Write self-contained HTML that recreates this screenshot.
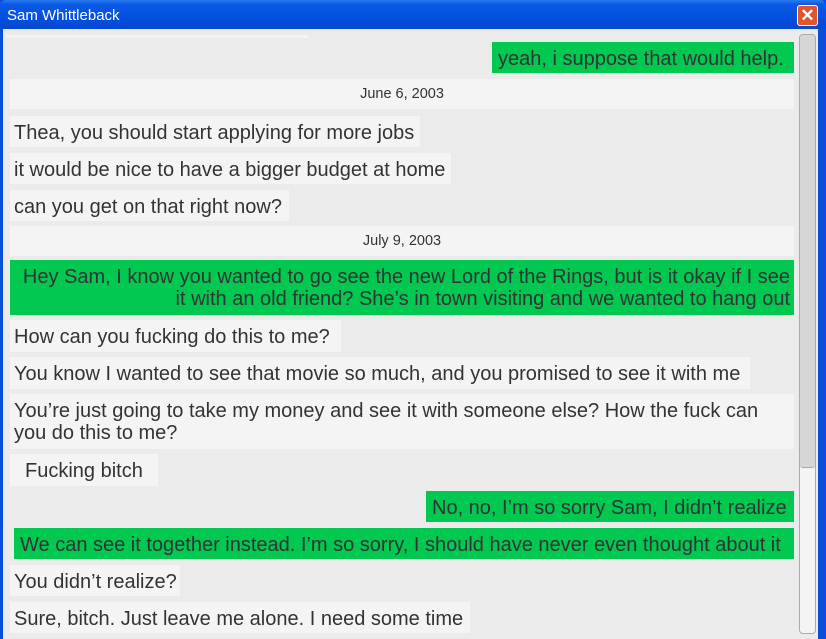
<!DOCTYPE html>
<html><head><meta charset="utf-8"><style>
*{margin:0;padding:0;box-sizing:border-box}
body{width:826px;height:639px;overflow:hidden;background:#0a4fd8;font-family:"Liberation Sans",sans-serif;position:relative}
.title{position:absolute;left:0;top:0;width:826px;height:29px;background:linear-gradient(#2a7cf0 0%,#0a5ae6 15%,#0550e0 60%,#0448d0 100%);border-radius:6px 6px 0 0}
.title span{position:absolute;left:7px;top:7px;color:#fff;font-size:15px}
.close{position:absolute;left:797px;top:5px;width:21px;height:21px;background:#e0552e;border:1px solid #fff;border-radius:3px;color:#fff;font-size:17px;line-height:19px;text-align:center;font-weight:bold}
.body{position:absolute;left:3px;top:29px;width:815px;height:610px;background:#ebebeb}
.b{position:absolute;background:#f4f4f4;color:#333;font-size:20px;line-height:22px;padding:6px 4px 4px 4px;white-space:nowrap;overflow:hidden}
.g{background:#00c850;padding-left:6px}
.d{position:absolute;left:10px;width:784px;height:30px;background:#f4f4f4;font-size:14.5px;color:#333;text-align:center;line-height:30px}
.sb{position:absolute;left:799px;top:34px;width:17px;height:600px;border:1px solid #aaa;border-radius:4px;background:#f4f4f4}
.th{position:absolute;left:0;top:0;width:15px;height:433px;background:#d6d6d6;border-bottom:1px solid #aaa;border-radius:3px}
</style></head><body>
<div class="title"><span>Sam Whittleback</span><div class="close">✕</div></div>
<div class="body"></div>
<div style="position:absolute;left:6px;top:35px;width:302px;height:3px;background:#f4f4f4"></div>
<div class="b g" style="left:492px;top:42px;width:302px;height:31px">yeah, i suppose that would help.</div>
<div class="d" style="top:79px">June 6, 2003</div>
<div class="b" style="left:10px;top:116px;width:410px;height:31px">Thea, you should start applying for more jobs</div>
<div class="b" style="left:10px;top:153px;width:441px;height:31px">it would be nice to have a bigger budget at home</div>
<div class="b" style="left:10px;top:190px;width:279px;height:31px">can you get on that right now?</div>
<div class="d" style="top:226px">July 9, 2003</div>
<div class="b g" style="left:10px;top:260px;width:784px;height:55px;text-align:right">Hey Sam, I know you wanted to go see the new Lord of the Rings, but is it okay if I see<br>it with an old friend? She’s in town visiting and we wanted to hang out</div>
<div class="b" style="left:10px;top:320px;width:331px;height:32px">How can you fucking do this to me?</div>
<div class="b" style="left:10px;top:357px;width:740px;height:32px">You know I wanted to see that movie so much, and you promised to see it with me</div>
<div class="b" style="left:10px;top:394px;width:784px;height:55px">You’re just going to take my money and see it with someone else? How the fuck can<br>you do this to me?</div>
<div class="b" style="left:10px;top:454px;width:148px;height:32px;padding-left:15px">Fucking bitch</div>
<div class="b g" style="left:426px;top:491px;width:368px;height:31px">No, no, I’m so sorry Sam, I didn’t realize</div>
<div class="b g" style="left:14px;top:528px;width:780px;height:31px">We can see it together instead. I’m so sorry, I should have never even thought about it</div>
<div class="b" style="left:10px;top:565px;width:170px;height:31px">You didn’t realize?</div>
<div class="b" style="left:10px;top:602px;width:460px;height:31px">Sure, bitch. Just leave me alone. I need some time</div>
<div class="sb"><div class="th"></div></div>
</body></html>
